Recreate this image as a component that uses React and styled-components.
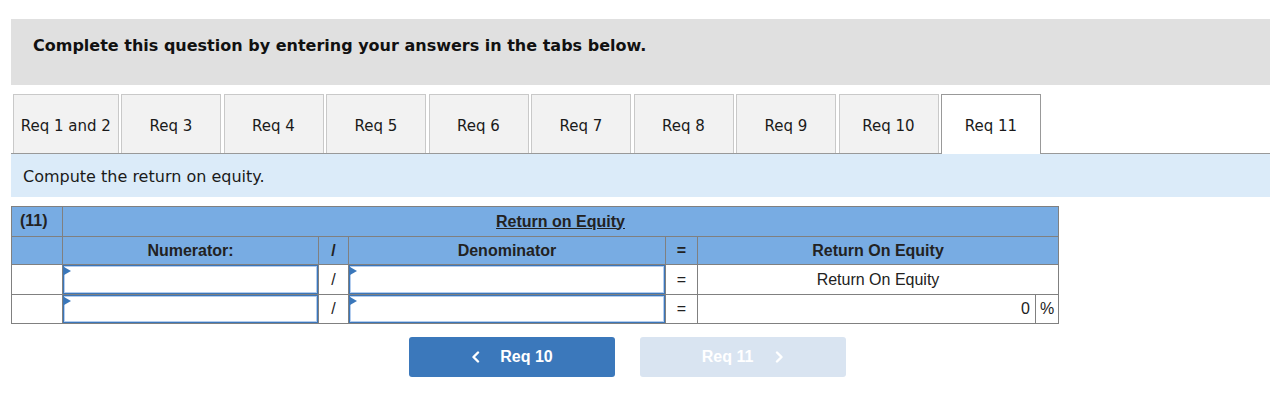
import React from 'react';
import styled, { createGlobalStyle } from 'styled-components';

const GlobalStyle = createGlobalStyle`
  body {
    margin: 0;
    background: #ffffff;
    font-family: "Liberation Sans", Arial, sans-serif;
  }
`;

const tabs = ['Req 1 and 2', 'Req 3', 'Req 4', 'Req 5', 'Req 6', 'Req 7', 'Req 8', 'Req 9', 'Req 10', 'Req 11'];

const Page = styled.div`
  padding: 19px 12px 20px 11px;
`;

const Banner = styled.div`
  box-sizing: border-box;
  height: 66px;
  padding: 17px 22px;
  background: #e0e0e0;
  font-family: "DejaVu Sans", Verdana, sans-serif;
  font-weight: bold;
  font-size: 16px;
  color: #111;
`;

const TabBar = styled.div`
  display: flex;
  align-items: flex-end;
  gap: 2.5px;
  margin-top: 9px;
  padding-left: 2px;
`;

const Tab = styled.div`
  box-sizing: border-box;
  display: flex;
  align-items: center;
  justify-content: center;
  padding-top: 3px;
  width: ${(p) => (p.$wide ? '105.5px' : '100px')};
  height: ${(p) => (p.$active ? '60px' : '59px')};
  margin-bottom: ${(p) => (p.$active ? '-1px' : '0')};
  background: ${(p) => (p.$active ? '#ffffff' : '#f2f2f2')};
  border: 1px solid ${(p) => (p.$active ? '#999999' : '#c9c9c9')};
  border-bottom: none;
  font-family: "DejaVu Sans", Verdana, sans-serif;
  font-size: 15px;
  color: #1a1a1a;
  white-space: nowrap;
  position: relative;
  z-index: ${(p) => (p.$active ? 1 : 0)};
`;

const Prompt = styled.div`
  box-sizing: border-box;
  height: 44px;
  display: flex;
  align-items: center;
  padding: 1px 0 0 12px;
  background: #dbebf9;
  border-top: 1px solid #999999;
  font-family: "DejaVu Sans", Verdana, sans-serif;
  font-size: 16px;
  color: #1a1a1a;
`;

const Grid = styled.table`
  margin-top: 9px;
  border-collapse: collapse;
  table-layout: fixed;
  width: 1047px;
  font-size: 16px;
  color: #222;
`;

const Cell = styled.td`
  box-sizing: border-box;
  height: ${(p) => p.$h || 30}px;
  border: 1px solid #808080;
  padding: ${(p) => (p.$flush ? '0' : '0 5px')};
  background: ${(p) => (p.$head ? '#78ace3' : '#ffffff')};
  font-weight: ${(p) => (p.$head ? 'bold' : 'normal')};
  text-align: ${(p) => p.$align || 'center'};
  vertical-align: ${(p) => p.$valign || 'middle'};
`;

const Title = styled.span`
  text-decoration: underline;
`;

const Entry = styled.div`
  position: relative;
  box-sizing: border-box;
  height: ${(p) => p.$h || 29}px;
  border: 1px solid #3c76b9;
  box-shadow: inset 0 0 0 1px #b4cdee, inset 0 0 0 2px #ffffff;
  background: #ffffff;

  &::before {
    content: '';
    position: absolute;
    left: 0;
    top: 1px;
    border-left: 7px solid #3a77ba;
    border-top: 4px solid transparent;
    border-bottom: 4px solid transparent;
  }
`;

const Nav = styled.div`
  display: flex;
  gap: 25px;
  margin-top: 13px;
  padding-left: 398px;
`;

const NavButton = styled.button`
  display: flex;
  align-items: center;
  justify-content: center;
  gap: ${(p) => (p.$next ? '22px' : '20px')};
  width: 206px;
  height: 40px;
  border: none;
  border-radius: 3px;
  background: ${(p) => (p.disabled ? '#d9e4f1' : '#3b78bb')};
  color: #ffffff;
  font-family: "Liberation Sans", Arial, sans-serif;
  font-weight: bold;
  font-size: 16px;
  cursor: ${(p) => (p.disabled ? 'default' : 'pointer')};
`;

const Chevron = ({ dir }) => (
  <svg width="9" height="12" viewBox="0 0 9 12" fill="none">
    <polyline
      points={dir === 'left' ? '7,1.5 2.5,6 7,10.5' : '2,1.5 6.5,6 2,10.5'}
      stroke="#ffffff"
      strokeWidth="2.4"
      strokeLinecap="round"
      strokeLinejoin="round"
    />
  </svg>
);

export default function App() {
  return (
    <Page>
      <GlobalStyle />
      <Banner>Complete this question by entering your answers in the tabs below.</Banner>

      <TabBar>
        {tabs.map((t, i) => (
          <Tab key={t} $wide={i === 0} $active={i === tabs.length - 1}>
            {t}
          </Tab>
        ))}
      </TabBar>
      <Prompt>Compute the return on equity.</Prompt>

      <Grid>
        <colgroup>
          <col style={{ width: 51 }} />
          <col style={{ width: 256 }} />
          <col style={{ width: 30 }} />
          <col style={{ width: 317 }} />
          <col style={{ width: 32 }} />
          <col style={{ width: 338 }} />
          <col style={{ width: 23 }} />
        </colgroup>
        <tbody>
          <tr>
            <Cell $head $align="left" $valign="top" style={{ paddingTop: 5, paddingLeft: 8 }}>(11)</Cell>
            <Cell $head colSpan={6}>
              <Title>Return on Equity</Title>
            </Cell>
          </tr>
          <tr>
            <Cell $head $h={28} />
            <Cell $head $h={28}>Numerator:</Cell>
            <Cell $head $h={28}>/</Cell>
            <Cell $head $h={28}>Denominator</Cell>
            <Cell $head $h={28}>=</Cell>
            <Cell $head $h={28} colSpan={2}>Return On Equity</Cell>
          </tr>
          <tr>
            <Cell />
            <Cell $flush><Entry /></Cell>
            <Cell>/</Cell>
            <Cell $flush><Entry /></Cell>
            <Cell>=</Cell>
            <Cell colSpan={2}>Return On Equity</Cell>
          </tr>
          <tr>
            <Cell $h={29} />
            <Cell $h={29} $flush><Entry $h={28} /></Cell>
            <Cell $h={29}>/</Cell>
            <Cell $h={29} $flush><Entry $h={28} /></Cell>
            <Cell $h={29}>=</Cell>
            <Cell $h={29} $align="right">0</Cell>
            <Cell $h={29} $flush>%</Cell>
          </tr>
        </tbody>
      </Grid>

      <Nav>
        <NavButton>
          <Chevron dir="left" />
          Req 10
        </NavButton>
        <NavButton $next disabled>
          Req 11
          <Chevron dir="right" />
        </NavButton>
      </Nav>
    </Page>
  );
}
